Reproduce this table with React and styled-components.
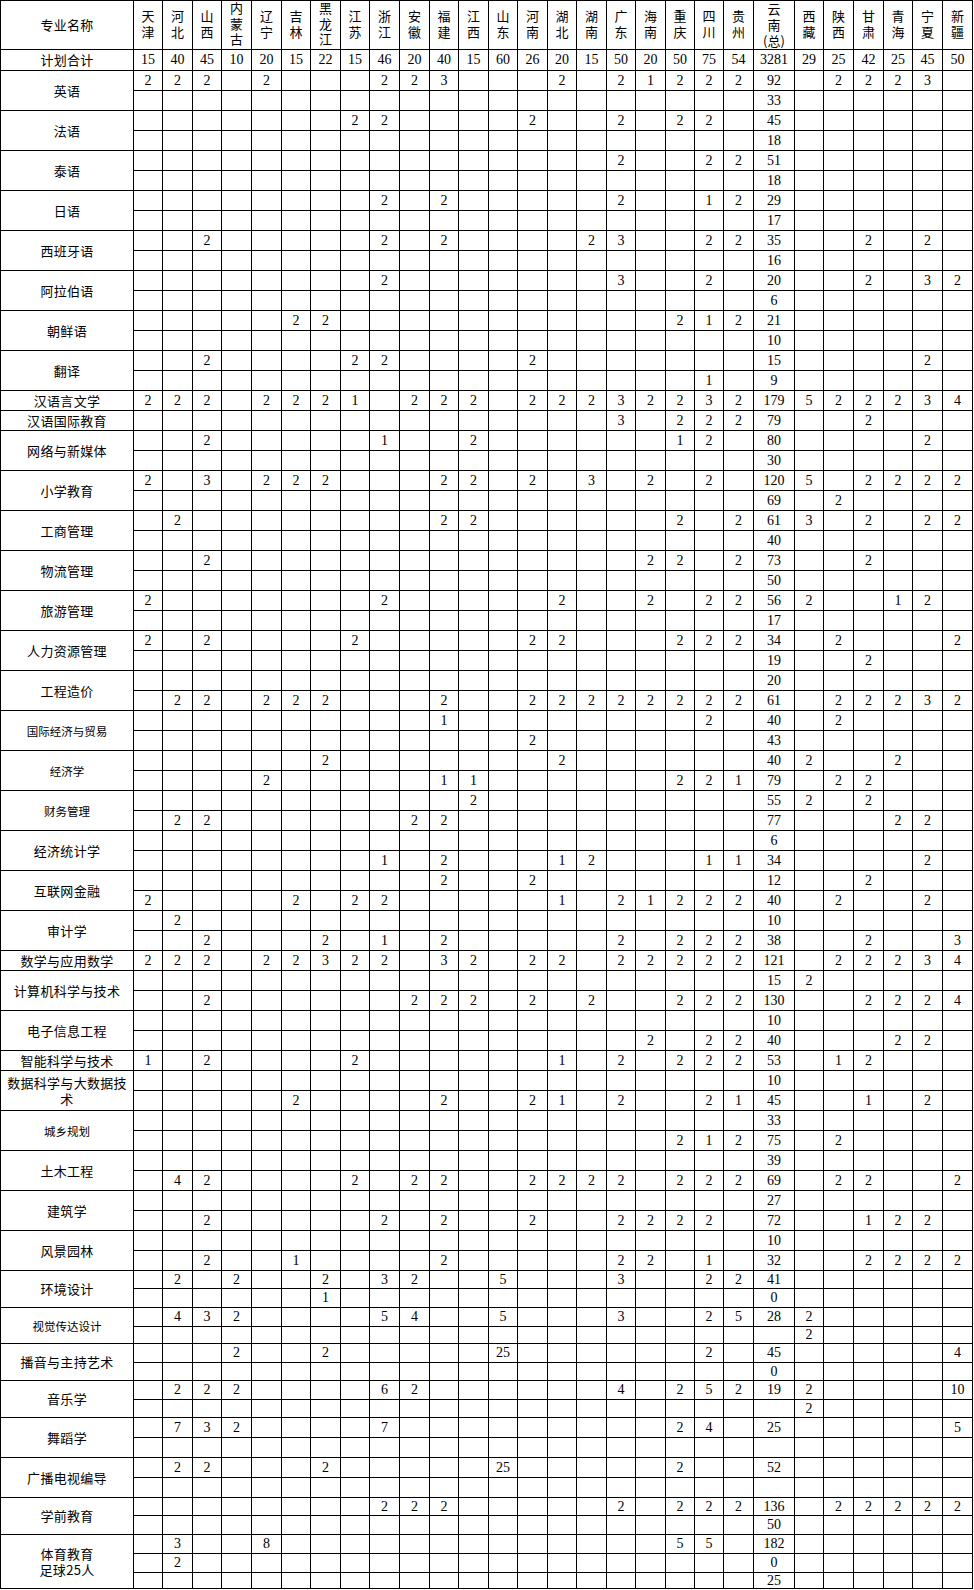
import styled, { createGlobalStyle } from 'styled-components';

const GlobalStyle = createGlobalStyle`
  body {
    margin: 0;
    background: #fff;
  }
`;

const provinces = [
  { key: '天津', w: 29, total: 15 },
  { key: '河北', w: 30, total: 40 },
  { key: '山西', w: 29, total: 45 },
  { key: '内蒙古', w: 30, total: 10 },
  { key: '辽宁', w: 30, total: 20 },
  { key: '吉林', w: 29, total: 15 },
  { key: '黑龙江', w: 30, total: 22 },
  { key: '江苏', w: 29, total: 15 },
  { key: '浙江', w: 30, total: 46 },
  { key: '安徽', w: 30, total: 20 },
  { key: '福建', w: 29, total: 40 },
  { key: '江西', w: 30, total: 15 },
  { key: '山东', w: 29, total: 60 },
  { key: '河南', w: 30, total: 26 },
  { key: '湖北', w: 29, total: 20 },
  { key: '湖南', w: 30, total: 15 },
  { key: '广东', w: 29, total: 50 },
  { key: '海南', w: 30, total: 20 },
  { key: '重庆', w: 29, total: 50 },
  { key: '四川', w: 29, total: 75 },
  { key: '贵州', w: 30, total: 54 },
  { key: '云南', w: 41, total: 3281, note: '(总)' },
  { key: '西藏', w: 29, total: 29 },
  { key: '陕西', w: 30, total: 25 },
  { key: '甘肃', w: 30, total: 42 },
  { key: '青海', w: 29, total: 25 },
  { key: '宁夏', w: 30, total: 45 },
  { key: '新疆', w: 30, total: 50 },
];

// each row: "省份数字" tokens, empty cells are left out
const majors = [
  { name: '英语', rows: ['天津2 河北2 山西2 辽宁2 浙江2 安徽2 福建3 湖北2 广东2 海南1 重庆2 四川2 贵州2 云南92 陕西2 甘肃2 青海2 宁夏3', '云南33'] },
  { name: '法语', rows: ['江苏2 浙江2 河南2 广东2 重庆2 四川2 云南45', '云南18'] },
  { name: '泰语', rows: ['广东2 四川2 贵州2 云南51', '云南18'] },
  { name: '日语', rows: ['浙江2 福建2 广东2 四川1 贵州2 云南29', '云南17'] },
  { name: '西班牙语', rows: ['山西2 浙江2 福建2 湖南2 广东3 四川2 贵州2 云南35 甘肃2 宁夏2', '云南16'] },
  { name: '阿拉伯语', rows: ['浙江2 广东3 四川2 云南20 甘肃2 宁夏3 新疆2', '云南6'] },
  { name: '朝鲜语', rows: ['吉林2 黑龙江2 重庆2 四川1 贵州2 云南21', '云南10'] },
  { name: '翻译', rows: ['山西2 江苏2 浙江2 河南2 云南15 宁夏2', '四川1 云南9'] },
  { name: '汉语言文学', rows: ['天津2 河北2 山西2 辽宁2 吉林2 黑龙江2 江苏1 安徽2 福建2 江西2 河南2 湖北2 湖南2 广东3 海南2 重庆2 四川3 贵州2 云南179 西藏5 陕西2 甘肃2 青海2 宁夏3 新疆4'] },
  { name: '汉语国际教育', rows: ['广东3 重庆2 四川2 贵州2 云南79 甘肃2'] },
  { name: '网络与新媒体', rows: ['山西2 浙江1 江西2 重庆1 四川2 云南80 宁夏2', '云南30'] },
  { name: '小学教育', rows: ['天津2 山西3 辽宁2 吉林2 黑龙江2 福建2 江西2 河南2 湖南3 海南2 四川2 云南120 西藏5 甘肃2 青海2 宁夏2 新疆2', '云南69 陕西2'] },
  { name: '工商管理', rows: ['河北2 福建2 江西2 重庆2 贵州2 云南61 西藏3 甘肃2 宁夏2 新疆2', '云南40'] },
  { name: '物流管理', rows: ['山西2 海南2 重庆2 贵州2 云南73 甘肃2', '云南50'] },
  { name: '旅游管理', rows: ['天津2 浙江2 湖北2 海南2 四川2 贵州2 云南56 西藏2 青海1 宁夏2', '云南17'] },
  { name: '人力资源管理', rows: ['天津2 山西2 江苏2 河南2 湖北2 重庆2 四川2 贵州2 云南34 陕西2 新疆2', '云南19 甘肃2'] },
  { name: '工程造价', rows: ['云南20', '河北2 山西2 辽宁2 吉林2 黑龙江2 福建2 河南2 湖北2 湖南2 广东2 海南2 重庆2 四川2 贵州2 云南61 陕西2 甘肃2 青海2 宁夏3 新疆2'] },
  { name: '国际经济与贸易', small: true, rows: ['福建1 四川2 云南40 陕西2', '河南2 云南43'] },
  { name: '经济学', small: true, rows: ['黑龙江2 湖北2 云南40 西藏2 青海2', '辽宁2 福建1 江西1 重庆2 四川2 贵州1 云南79 陕西2 甘肃2'] },
  { name: '财务管理', small: true, rows: ['江西2 云南55 西藏2 甘肃2', '河北2 山西2 安徽2 福建2 云南77 青海2 宁夏2'] },
  { name: '经济统计学', rows: ['云南6', '浙江1 福建2 湖北1 湖南2 四川1 贵州1 云南34 宁夏2'] },
  { name: '互联网金融', rows: ['福建2 河南2 云南12 甘肃2', '天津2 吉林2 江苏2 浙江2 湖北1 广东2 海南1 重庆2 四川2 贵州2 云南40 陕西2 宁夏2'] },
  { name: '审计学', rows: ['河北2 云南10', '山西2 黑龙江2 浙江1 福建2 广东2 重庆2 四川2 贵州2 云南38 甘肃2 新疆3'] },
  { name: '数学与应用数学', rows: ['天津2 河北2 山西2 辽宁2 吉林2 黑龙江3 江苏2 浙江2 福建3 江西2 河南2 湖北2 广东2 海南2 重庆2 四川2 贵州2 云南121 陕西2 甘肃2 青海2 宁夏3 新疆4'] },
  { name: '计算机科学与技术', rows: ['云南15 西藏2', '山西2 安徽2 福建2 江西2 河南2 湖南2 重庆2 四川2 贵州2 云南130 甘肃2 青海2 宁夏2 新疆4'] },
  { name: '电子信息工程', rows: ['云南10', '海南2 四川2 贵州2 云南40 青海2 宁夏2'] },
  { name: '智能科学与技术', rows: ['天津1 山西2 江苏2 湖北1 广东2 重庆2 四川2 贵州2 云南53 陕西1 甘肃2'] },
  { name: '数据科学与大数据技\n术', rows: ['云南10', '吉林2 福建2 河南2 湖北1 广东2 四川2 贵州1 云南45 甘肃1 宁夏2'] },
  { name: '城乡规划', small: true, rows: ['云南33', '重庆2 四川1 贵州2 云南75 陕西2'] },
  { name: '土木工程', rows: ['云南39', '河北4 山西2 江苏2 安徽2 福建2 河南2 湖北2 湖南2 广东2 重庆2 四川2 贵州2 云南69 陕西2 甘肃2 新疆2'] },
  { name: '建筑学', rows: ['云南27', '山西2 浙江2 福建2 河南2 广东2 海南2 重庆2 四川2 云南72 甘肃1 青海2 宁夏2'] },
  { name: '风景园林', rows: ['云南10', '山西2 吉林1 福建2 广东2 海南2 四川1 云南32 甘肃2 青海2 宁夏2 新疆2'] },
  { name: '环境设计', heights: [18, 19], rows: ['河北2 内蒙古2 黑龙江2 浙江3 安徽2 山东5 广东3 四川2 贵州2 云南41', '黑龙江1 云南0'] },
  { name: '视觉传达设计', small: true, heights: [19, 17], rows: ['河北4 山西3 内蒙古2 浙江5 安徽4 山东5 广东3 四川2 贵州5 云南28 西藏2', '西藏2'] },
  { name: '播音与主持艺术', heights: [19, 18], rows: ['内蒙古2 黑龙江2 山东25 四川2 云南45 新疆4', '云南0'] },
  { name: '音乐学', heights: [19, 18], rows: ['河北2 山西2 内蒙古2 浙江6 安徽2 广东4 重庆2 四川5 贵州2 云南19 西藏2 新疆10', '西藏2'] },
  { name: '舞蹈学', heights: [20, 20], rows: ['河北7 山西3 内蒙古2 浙江7 重庆2 四川4 云南25 新疆5', ''] },
  { name: '广播电视编导', heights: [20, 20], rows: ['河北2 山西2 黑龙江2 山东25 重庆2 云南52', ''] },
  { name: '学前教育', heights: [18, 19], rows: ['浙江2 安徽2 福建2 广东2 重庆2 四川2 贵州2 云南136 陕西2 甘肃2 青海2 宁夏2 新疆2', '云南50'] },
  { name: '体育教育\n足球25人', heights: [19, 19, 16], rows: ['河北3 辽宁8 重庆5 四川5 云南182', '河北2 云南0', '云南25'] },
];

const parseRow = (text) => {
  const cells = {};
  text
    .split(/\s+/)
    .filter(Boolean)
    .forEach((token) => {
      const [, key, value] = token.match(/^(\D+)(\d+)$/);
      cells[key] = value;
    });
  return cells;
};

const Sheet = styled.table`
  width: 973px;
  border-collapse: collapse;
  table-layout: fixed;
  color: #000;
  background: #fff;

  td {
    border: 1px solid #000;
    padding: 0;
    text-align: center;
    vertical-align: middle;
    overflow: hidden;
  }
`;

const Col = styled.col`
  width: ${(p) => p.$w}px;
`;

const Row = styled.tr`
  height: ${(p) => p.$h}px;
`;

const NameCell = styled.td`
  font-family: 'Noto Sans CJK SC', 'Noto Sans', sans-serif;
  font-size: ${(p) => (p.$small ? '11.5px' : '13px')};
  letter-spacing: ${(p) => (p.$small ? '0' : '0.3px')};
  line-height: 16px;
  white-space: pre-line;
`;

const ProvHead = styled.td`
  font-family: 'Noto Sans CJK SC', 'Noto Sans', sans-serif;
  font-size: 13px;
  line-height: 13px;
`;

const HeadStack = styled.div`
  display: flex;
  flex-direction: column;
  align-items: center;
`;

const ProvName = styled.span`
  writing-mode: vertical-rl;
  text-orientation: upright;
  letter-spacing: 2.5px;
  line-height: 13px;
`;

const ProvNote = styled.span`
  line-height: 13px;
  white-space: nowrap;
`;

const Num = styled.td`
  font-family: 'Liberation Serif', 'Times New Roman', serif;
  font-size: 14px;
  line-height: 14px;
  white-space: nowrap;
`;

export default function App() {
  return (
    <>
      <GlobalStyle />
      <Sheet>
        <colgroup>
          <Col $w={133} />
          {provinces.map((p) => (
            <Col key={p.key} $w={p.w} />
          ))}
        </colgroup>
        <tbody>
          <Row $h={49}>
            <NameCell>专业名称</NameCell>
            {provinces.map((p) => (
              <ProvHead key={p.key}>
                <HeadStack>
                  <ProvName>{p.key}</ProvName>
                  {p.note && <ProvNote>{p.note}</ProvNote>}
                </HeadStack>
              </ProvHead>
            ))}
          </Row>
          <Row $h={21}>
            <NameCell>计划合计</NameCell>
            {provinces.map((p) => (
              <Num key={p.key}>{p.total}</Num>
            ))}
          </Row>
          {majors.flatMap((m) =>
            m.rows.map((text, i) => {
              const cells = parseRow(text);
              return (
                <Row key={`${m.name}-${i}`} $h={m.heights ? m.heights[i] : 20}>
                  {i === 0 && (
                    <NameCell rowSpan={m.rows.length} $small={m.small}>
                      {m.name}
                    </NameCell>
                  )}
                  {provinces.map((p) => (
                    <Num key={p.key}>{cells[p.key]}</Num>
                  ))}
                </Row>
              );
            })
          )}
        </tbody>
      </Sheet>
    </>
  );
}
